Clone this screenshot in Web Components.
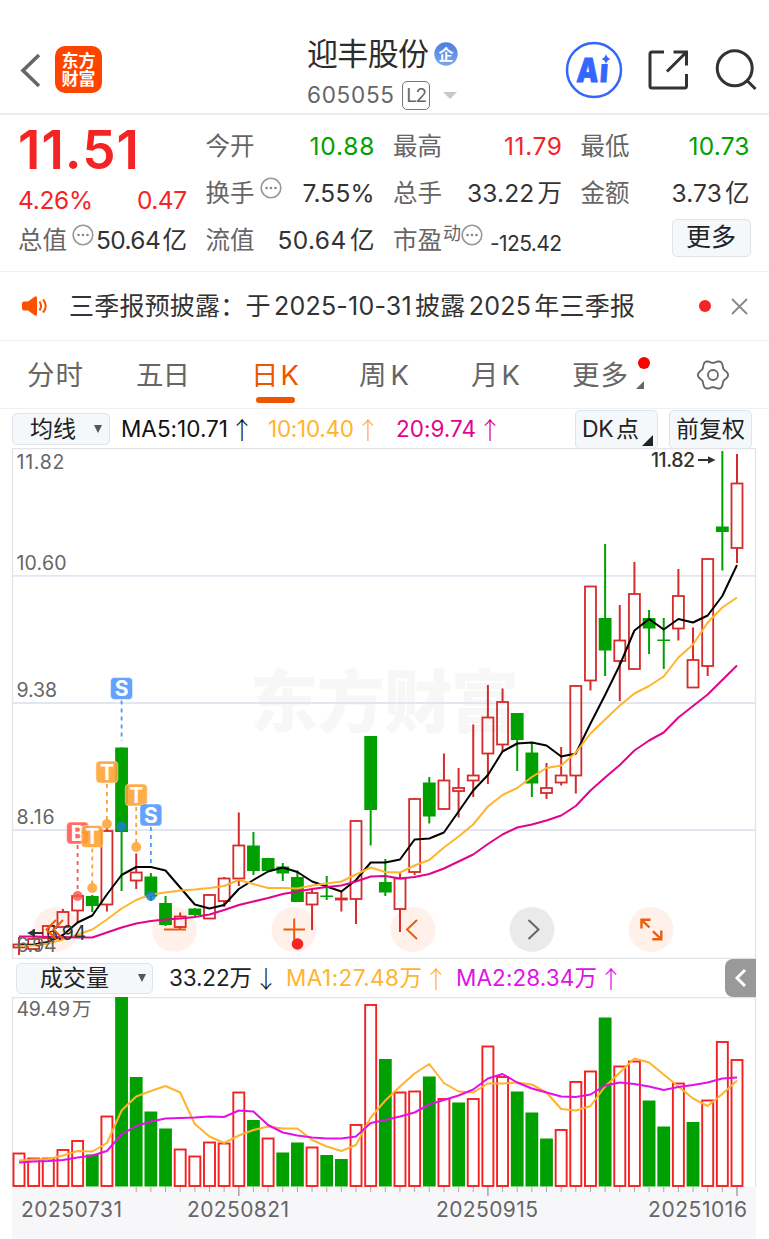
<!DOCTYPE html>
<html lang="zh-CN">
<head>
<meta charset="utf-8">
<meta name="viewport" content="width=device-width, initial-scale=1">
<title>迎丰股份 605055</title>
<style>
    html, body {
        margin: 0;
        background: #fff;
    }

    body {
        width: 769px;
        height: 1239px;
        overflow: hidden;
        font-family: Inter, "Noto Sans CJK SC", sans-serif;
        font-size: 24px;
        line-height: 1;
        color: #333;
    }
</style>
</head>
<body>
<stock-page></stock-page>

<script>
const RED = '#d62b2b';
const GREEN = '#00a000';

// Shared base: puts the markup into an open shadow root
class BaseElement extends HTMLElement {
    connectedCallback() {
        if (this.shadowRoot) return;
        this.attachShadow({ mode: 'open' }).innerHTML = this.render();
        this.ready();
    }

    render() { return ''; }

    ready() {}
}

class StockPage extends BaseElement {
    render() {
        return `
            <style>
                :host {
                    display: flex;
                    flex-direction: column;
                    height: 1239px;
                }
            </style>
            <stock-header></stock-header>
            <quote-panel></quote-panel>
            <notice-bar></notice-bar>
            <period-tabs></period-tabs>
            <ma-bar></ma-bar>
            <k-chart></k-chart>
            <volume-bar></volume-bar>
            <volume-chart></volume-chart>
        `;
    }
}

class StockHeader extends BaseElement {
    render() {
        return `
            <style>
                :host {
                    display: flex;
                    box-sizing: border-box;
                    height: 115px;
                    padding: 26px 12px 0 20px;
                    border-bottom: 2px solid #ececec;
                    align-items: center;
                    justify-content: space-between;
                }
                .side {
                    display: flex;
                    align-items: center;
                    width: 287px;
                }
                .logo {
                    display: flex;
                    flex-direction: column;
                    align-items: center;
                    justify-content: center;
                    width: 47px;
                    height: 47px;
                    margin-left: 13px;
                    border-radius: 10px;
                    background: #ff4400;
                    color: #fff;
                    font-size: 17px;
                    line-height: 18px;
                    font-weight: 700;
                }
                .title {
                    flex: 1;
                    height: 76px;
                }
                .name, .code {
                    display: flex;
                    align-items: center;
                }
                .name {
                    height: 42px;
                    margin-top: 1px;
                    font-size: 31px;
                    color: #2c2c2c;
                }
                .name svg { margin-left: 5px; }
                .code {
                    height: 38px;
                    margin-top: 2px;
                    font-size: 22.5px;
                    color: #666;
                }
                .level {
                    box-sizing: border-box;
                    width: 28px;
                    height: 29px;
                    margin-left: 8px;
                    border: 1.5px solid #777;
                    border-radius: 5px;
                    font-size: 19px;
                    line-height: 27px;
                    text-align: center;
                }
                .arrow {
                    margin-left: 13px;
                    border: 7px solid transparent;
                    border-top-color: #c8c8c8;
                    border-bottom: 0;
                }
                .tools {
                    display: flex;
                    align-items: center;
                }
            </style>
            <div class="side">
                <svg width="22" height="36" viewBox="20 52 22 36">
                    <path d="M39 55L23 70.5L39 86" fill="none" stroke="#666" stroke-width="3.6"/>
                </svg>
                <div class="logo"><span>东方</span><span>财富</span></div>
            </div>
            <div class="title">
                <div class="name">
                    <tracked-text width="122">迎丰股份</tracked-text>
                    <svg width="24" height="24" viewBox="0 0 24 24">
                        <defs><linearGradient id="g" x2="0" y2="1"><stop stop-color="#4a7fe0"/><stop offset="1" stop-color="#7ba6f0"/></linearGradient></defs>
                        <circle cx="12" cy="12" r="11.7" fill="url(#g)"/>
                        <text x="12" y="17.5" text-anchor="middle" font-size="15" font-weight="700" fill="#fff">企</text>
                    </svg>
                </div>
                <div class="code">
                    <tracked-text width="87">605055</tracked-text>
                    <span class="level"><tracked-text width="21">L2</tracked-text></span>
                    <i class="arrow"></i>
                </div>
            </div>
            <div class="tools">
                <svg width="192" height="58" viewBox="565 41.5 192 58" fill="none" stroke="#333" stroke-width="3">
                    <circle cx="594" cy="70.5" r="27" stroke="#3366ff" stroke-width="2.5"/>
                    <text transform="translate(576 82) skewX(-4) scale(0.84 1)" font-size="33" font-weight="900" fill="#3366ff" stroke="#3366ff" stroke-width="0.8">A<tspan dx="1.5">i</tspan></text>
                    <path d="M599.5 54H614V64.5H599.5Z" fill="#fff" stroke="none"/>
                    <path d="M606 54.5Q607 58.3 610.5 59.5Q607 60.7 606 64.5Q605 60.7 601.5 59.5Q605 58.3 606 54.5Z" fill="#3366ff" stroke="none"/>
                    <path d="M664 52.5H652Q650 52.5 650 54.5V86.5Q650 88.5 652 88.5H684.5Q686.5 88.5 686.5 86.5V74.5M673.5 52.5H686.5V66M686 53L667 72"/>
                    <circle cx="734.7" cy="68.7" r="17.5"/>
                    <path d="M746.5 80.5L755.5 89.5"/>
                </svg>
            </div>
        `;
    }
}

// One label/value pair of the quote grid
class QuoteCell extends BaseElement {
    render() {
        const info = this.hasAttribute('info');
        const sup = this.getAttribute('sup') || '';
        return `
            <style>
                :host {
                    display: flex;
                    align-items: center;
                    justify-content: space-between;
                    height: 47px;
                    color: #333;
                    white-space: nowrap;
                }
                .label {
                    display: flex;
                    color: #666;
                }
                .label svg { margin: -4px -5px 0 5px; }
                sup {
                    margin: -3px -5px 0 1px;
                    font-size: 18px;
                    line-height: 18px;
                }
                sup + svg { margin-right: 0 !important; }
            </style>
            <span class="label">${this.getAttribute('label')}${sup ? `<sup>${sup}</sup>` : ''}${info ? `
                <svg width="22" height="22" viewBox="0 0 22 22" fill="#888">
                    <circle cx="11" cy="11" r="9.8" fill="none" stroke="#999" stroke-width="1.6"/>
                    <circle cx="6.5" cy="11" r="1.3"/><circle cx="11" cy="11" r="1.3"/><circle cx="15.5" cy="11" r="1.3"/>
                </svg>` : ''}</span>
            <slot></slot>
        `;
    }
}

class QuotePanel extends BaseElement {
    render() {
        return `
            <style>
                :host {
                    display: grid;
                    box-sizing: border-box;
                    height: 157px;
                    padding: 8px 19px 0 18px;
                    border-bottom: 1px solid #f0f0f0;
                    grid-template-columns: 169px 169px 169px 169px;
                    grid-auto-rows: 47px;
                    column-gap: 18.5px;
                }
                .column { font-size: 24.5px; }
                .price {
                    height: 57px;
                    font-size: 53px;
                    line-height: 54px;
                    font-weight: 600;
                    color: #f52424;
                }
                .change {
                    display: flex;
                    justify-content: space-between;
                    height: 37px;
                    line-height: 41px;
                    color: #f52424;
                }
                .up { color: #f52424; }
                .down { color: #00a000; }
                .small { font-size: 21px; padding-top: 5px; }
                .more {
                    box-sizing: border-box;
                    width: 79px;
                    height: 38px;
                    margin: 2px -1px 0 auto;
                    border: 1.5px solid #dfe4ea;
                    border-radius: 5px;
                    background: #f4f8fa;
                    font-size: 25px;
                    line-height: 35px;
                    text-align: center;
                    color: #222;
                }
            </style>
            <div class="column">
                <div class="price"><tracked-text width="121">11.51</tracked-text></div>
                <div class="change">
                    <tracked-text width="75">4.26%</tracked-text>
                    <tracked-text width="50">0.47</tracked-text>
                </div>
                <quote-cell label="总值" info><tracked-text width="91">50.64 亿</tracked-text></quote-cell>
            </div>
            <div class="column">
                <quote-cell label="今开"><tracked-text class="down" width="65">10.88</tracked-text></quote-cell>
                <quote-cell label="换手" info><tracked-text width="72">7.55%</tracked-text></quote-cell>
                <quote-cell label="流值"><tracked-text width="97">50.64 亿</tracked-text></quote-cell>
            </div>
            <div class="column">
                <quote-cell label="最高"><tracked-text class="up" width="58">11.79</tracked-text></quote-cell>
                <quote-cell label="总手"><tracked-text width="95">33.22 万</tracked-text></quote-cell>
                <quote-cell label="市盈" sup="动" info><tracked-text class="small" width="72">-125.42</tracked-text></quote-cell>
            </div>
            <div class="column">
                <quote-cell label="最低"><tracked-text class="down" width="61">10.73</tracked-text></quote-cell>
                <quote-cell label="金额"><tracked-text width="78">3.73 亿</tracked-text></quote-cell>
                <div class="more">更多</div>
            </div>
        `;
    }
}

class NoticeBar extends BaseElement {
    render() {
        return `
            <style>
                :host {
                    display: flex;
                    box-sizing: border-box;
                    height: 69px;
                    padding: 0 21px;
                    border-bottom: 1px solid #f0f0f0;
                    align-items: center;
                    font-size: 25px;
                }
                tracked-text { margin-left: 20px; }
                .dot {
                    width: 12px;
                    height: 12px;
                    margin-left: auto;
                    border-radius: 50%;
                    background: #f52424;
                }
                .close { margin-left: 20px; }
            </style>
            <svg width="28" height="24" viewBox="0 0 28 24">
                <path d="M3 7.5H7L14 2.5Q16 1.5 16 4V20Q16 22.5 14 21.5L7 16.5H3Q1 16.5 1 14.5V9.5Q1 7.5 3 7.5Z" fill="#ff5000"/>
                <path d="M18.5 7.5Q21.5 12 18.5 16.5M22 5.5Q27.5 12 22 18.5" fill="none" stroke="#ff5000" stroke-width="2"/>
            </svg>
            <tracked-text width="566">三季报预披露：于 2025-10-31 披露 2025 年三季报</tracked-text>
            <i class="dot"></i>
            <svg class="close" width="17" height="17" viewBox="0 0 17 17">
                <path d="M1 1L16 16M16 1L1 16" stroke="#888" stroke-width="1.8"/>
            </svg>
        `;
    }
}

class PeriodTab extends BaseElement {
    render() {
        return `
            <style>
                :host {
                    display: flex;
                    height: 100%;
                    flex-direction: column;
                    align-items: center;
                    color: #666;
                }
                .text {
                    height: 60px;
                    line-height: 69px;
                }
                .line {
                    width: 39px;
                    height: 6px;
                    border-radius: 3px;
                }
                :host([active]) { color: #ee5500; }
                :host([active]) .line { background: #ee5500; margin-top: -4px; }
            </style>
            <span class="text"><slot></slot></span>
            <i class="line"></i>
        `;
    }
}

class PeriodTabs extends BaseElement {
    render() {
        // six-lobed outline of the settings icon
        let gear = '';
        for (let a = 0; a < 360; a += 5) {
            const t = a * Math.PI / 180;
            const r = 13.6 + 1.5 * Math.cos(6 * t);
            gear += `${a ? 'L' : 'M'}${(16 + r * Math.cos(t)).toFixed(2)} ${(16 + r * Math.sin(t)).toFixed(2)}`;
        }
        return `
            <style>
                :host {
                    display: flex;
                    box-sizing: border-box;
                    height: 68px;
                    padding: 0 40px 0 27px;
                    border-bottom: 1px solid #f0f0f0;
                    align-items: center;
                    font-size: 27.5px;
                }
                .day5 { margin-left: 53px; }
                .day { margin-left: 61px; }
                .week { margin-left: 60px; }
                .month { margin-left: 62px; }
                .more {
                    position: relative;
                    margin-left: 52px;
                    padding-right: 16px;
                }
                .more i {
                    position: absolute;
                    right: -6px;
                    top: 16px;
                    width: 12px;
                    height: 12px;
                    border-radius: 50%;
                    background: #ff0000;
                }
                .more b {
                    position: absolute;
                    right: 0;
                    top: 40px;
                    border-left: 8px solid transparent;
                    border-bottom: 8px solid #666;
                }
                .gear { margin-left: auto; }
            </style>
            <period-tab><tracked-text width="56">分时</tracked-text></period-tab>
            <period-tab class="day5"><tracked-text width="54">五日</tracked-text></period-tab>
            <period-tab class="day" active><tracked-text width="48">日 K</tracked-text></period-tab>
            <period-tab class="week"><tracked-text width="50">周 K</tracked-text></period-tab>
            <period-tab class="month"><tracked-text width="49">月 K</tracked-text></period-tab>
            <period-tab class="more"><tracked-text width="56">更多</tracked-text><i></i><b></b></period-tab>
            <svg class="gear" width="32" height="32" viewBox="0 0 32 32" fill="none" stroke="#666" stroke-width="1.8">
                <path d="${gear}Z"/>
                <circle cx="16" cy="16" r="5"/>
            </svg>
        `;
    }
}

class PickButton extends BaseElement {
    render() {
        return `
            <style>
                :host {
                    display: flex;
                    box-sizing: border-box;
                    align-items: center;
                    justify-content: center;
                    border: 1.5px solid #dfe4ea;
                    border-radius: 5px;
                    background: #f4f8fa;
                    color: #222;
                    font-size: 23px;
                    white-space: nowrap;
                }
                .down {
                    border: 4.5px solid transparent;
                    border-top: 8px solid #555;
                    border-bottom: 0;
                }
            </style>
            <slot></slot>${this.hasAttribute('list') ? '<i class="down"></i>' : ''}
        `;
    }
}

// Indicator value followed by a thin arrow
class TrendValue extends BaseElement {
    render() {
        return `
            <style>
                :host {
                    display: flex;
                    align-items: center;
                    font-size: 22.5px;
                }
                .arrow {
                    width: 24px;
                    margin-left: 2px;
                    font-family: "Noto Sans CJK SC", sans-serif;
                    font-size: 24px;
                    font-weight: 300;
                    text-align: center;
                }
            </style>
            <tracked-text width="${this.getAttribute('width')}">${this.getAttribute('value')}</tracked-text>
            <span class="arrow">${this.getAttribute('trend') === 'down' ? '↓' : '↑'}</span>
        `;
    }
}

class MaBar extends BaseElement {
    render() {
        return `
            <style>
                :host {
                    display: flex;
                    box-sizing: border-box;
                    height: 39px;
                    padding: 1px 17px 0 12px;
                    align-items: center;
                }
                .list {
                    width: 98px;
                    height: 32px;
                    gap: 18px;
                    padding-left: 10px;
                    margin-right: 11px;
                }
                .ma5 { color: #111; }
                .ma10 { color: #ffb42e; margin-left: 14px; }
                .ma20 { color: #e0058a; margin-left: 16px; }
                .dk, .adj { height: 39px; width: 83px; }
                .dk {
                    position: relative;
                    margin-left: auto;
                    margin-right: 11px;
                    padding-right: 12px;
                }
                .dk i {
                    position: absolute;
                    right: 4px;
                    bottom: 2px;
                    border-left: 11px solid transparent;
                    border-bottom: 11px solid #222;
                }
            </style>
            <pick-button class="list" list><tracked-text width="46">均线</tracked-text></pick-button>
            <trend-value class="ma5" value="MA5:10.71" width="107"></trend-value>
            <trend-value class="ma10" value="10:10.40" width="86"></trend-value>
            <trend-value class="ma20" value="20:9.74" width="80"></trend-value>
            <pick-button class="dk"><tracked-text width="57">DK 点</tracked-text><i></i></pick-button>
            <pick-button class="adj"><tracked-text width="69">前复权</tracked-text></pick-button>
        `;
    }
}

const STEP = 14.653;
const xAt = i => 19 + i * STEP;

function polyline(values, color) {
    const points = values.map((y, i) => `${xAt(i).toFixed(1)},${y}`).join(' ');
    return `<polyline points="${points}" fill="none" stroke="${color}" stroke-width="2" stroke-linejoin="round"/>`;
}

// colour, high, body top, body bottom, low
const CANDLES = [
    ['r', 937, 944.5, 947.5, 955], ['r', 929, 939, 949, 950], ['r', 925, 926, 938, 941], ['r', 909, 912, 927, 927],
    ['r', 894, 896, 910.5, 922], ['g', 895, 896, 906, 912], ['r', 828, 831, 904.5, 911.5], ['g', 747.5, 747.5, 832, 891],
    ['r', 853.5, 872.5, 880.5, 889], ['g', 873, 876.5, 896.5, 901], ['g', 896, 903, 925, 926], ['r', 912.5, 916.5, 927, 930],
    ['g', 908, 908.5, 915, 916.5], ['r', 894, 895, 918.5, 919], ['r', 877, 878.5, 901, 907], ['r', 812.5, 845.5, 878.5, 886],
    ['g', 832, 845.5, 871, 875], ['g', 858, 858, 871, 871], ['g', 863, 866.5, 873.5, 881], ['g', 870.5, 877, 902, 902],
    ['r', 890, 893, 904.5, 930], ['g', 876, 895.5, 897, 900], ['r', 892, 898.5, 899.5, 911.5], ['r', 820, 821, 899, 924],
    ['g', 736, 736, 810, 845.5], ['g', 859, 882, 892.5, 896], ['r', 872.5, 878.5, 909, 932], ['r', 798, 799, 872, 875],
    ['g', 777, 782.5, 816.5, 823.5], ['r', 753.5, 780.5, 809, 810], ['r', 768, 788, 791, 817.5], ['r', 724.5, 775.5, 780.5, 797],
    ['r', 685, 717.5, 753.5, 784], ['r', 688.5, 702, 744.5, 752], ['g', 713, 713, 740, 771], ['g', 742, 752.5, 783.5, 797],
    ['r', 763, 788, 793, 799], ['r', 747, 775.5, 782.5, 785.5], ['r', 685, 686, 775.5, 793.5], ['r', 586, 586.5, 680.5, 690.5],
    ['g', 544, 618, 650.5, 676], ['r', 605, 640.5, 661, 701], ['r', 562, 594, 669, 669], ['g', 610, 618, 628.5, 654],
    ['g', 618, 639.5, 641, 669], ['r', 569, 596, 628.5, 640.5], ['r', 627.5, 660, 687.5, 688], ['r', 558, 559, 666, 676],
    ['g', 451, 526.5, 532, 570.5], ['r', 454, 483.5, 548, 563]
];

const MA5 = [945, 944.5, 942, 935, 922.5, 915.5, 894.5, 875, 867, 867, 870.5, 887.5, 904.5, 908.5, 905, 889, 880, 871.5, 867.5, 872,
    881.5, 886.5, 891.5, 880, 862.5, 862.5, 859.5, 839.5, 838.5, 832.5, 811.5, 790.5, 775, 751.5, 743.5, 742.5, 745.5, 756.5, 753.5,
    723.5, 695, 665, 630.5, 619, 629.5, 619, 622.5, 615.5, 596, 565];
const MA10 = [946, 945.5, 943.5, 939.5, 934.5, 929.5, 919.5, 908.5, 900, 894.5, 892.5, 890.5, 889.5, 888, 886, 880, 884, 888, 888, 888.5,
    885.5, 883.5, 881.5, 874.5, 867.5, 872, 872.5, 865.5, 860, 847.5, 836.5, 824.5, 806.5, 795, 788, 777, 768, 765.5, 752.5,
    733.5, 719.5, 705.5, 693.5, 686, 676.5, 657.5, 644.5, 622.5, 607.5, 597.5];
const MA20 = [936.5, 936.5, 937, 937, 937.5, 937.5, 932.5, 927.5, 923.5, 921, 919.5, 918.5, 917, 914.5, 910, 905, 901.5, 898, 894, 891.5,
    889, 887, 885.5, 881.5, 876.5, 876, 878.5, 877, 874, 868.5, 861.5, 854.5, 844, 834.5, 827.5, 824.5, 820.5, 815.5, 806,
    790.5, 777.5, 765, 750.5, 740.5, 732.5, 717.5, 706, 694.5, 680, 665.5];

// letter, candle index, badge centre, end of the dashed line, dot centre, colour
const MARKS = [
    ['B', 4, 833, 893, 896, '#ff5a50'],
    ['T', 5, 836.5, 885, 888, '#ffa130'],
    ['T', 6, 772, 822, 824, '#ffa130'],
    ['T', 8, 795, 843, 847, '#ffa130'],
    ['S', 7, 688.5, 741, 826.5, '#4f96ff'],
    ['S', 9, 815, 866, 896, '#4f96ff']
];

class KChart extends BaseElement {
    candle([kind, high, top, bottom, low], i) {
        const x = xAt(i);
        if (kind === 'g') {
            return `<path d="M${x} ${high}V${low}" stroke="${GREEN}" stroke-width="2"/>
                <rect x="${x - 6.4}" y="${top}" width="12.8" height="${bottom - top}" fill="${GREEN}"/>`;
        }
        return `<path d="M${x} ${high}V${top}M${x} ${bottom}V${low}" stroke="${RED}" stroke-width="2"/>
            <rect x="${x - 5.5}" y="${top}" width="11" height="${bottom - top}" fill="none" stroke="${RED}" stroke-width="1.8"/>`;
    }

    mark([letter, i, y, end, dot, color]) {
        const x = xAt(i);
        const dotColor = letter === 'S' ? '#1d7fd0' : color;
        return `<path d="M${x} ${y + 12}V${end}" stroke="${color}" stroke-width="1.8" stroke-dasharray="4 4"/>
            <circle cx="${x}" cy="${dot}" r="5" fill="${dotColor}" opacity="0.85"/>
            <rect x="${x - 11}" y="${y - 11}" width="22" height="22" rx="4" fill="${color}" opacity="0.88" stroke="#fff" stroke-opacity="0.5"/>
            <text x="${x}" y="${y + 7.5}" text-anchor="middle" font-size="21" font-weight="700" fill="#fff">${letter}</text>`;
    }

    render() {
        const grid = [575.8, 703, 830].map(y => `<path d="M13 ${y}H755.5" stroke="#e2e6f0" stroke-width="1.8"/>`).join('');
        const labels = [['11.82', 469, 48], ['10.60', 570, 50], ['9.38', 697, 40.5], ['8.16', 824, 38], ['6.94', 951.5, 40]]
            .map(([t, y, w]) => `<text x="16.5" y="${y}" textLength="${w}" fill="#666">${t}</text>`).join('');
        const circles = [56, 174.5, 294, 413, 532, 651]
            .map((x, i) => `<circle cx="${x}" cy="929.5" r="22.5" fill="${i === 4 ? '#e8e8e8' : '#fff0e8'}" opacity="0.9"/>`).join('');
        return `
            <style>
                :host { display: block; height: 511px; }
                svg { display: block; }
            </style>
            <svg width="769" height="511" viewBox="0 448 769 511" font-size="19.5">
                <text x="250" y="727" font-size="68" font-weight="900" textLength="269" fill="#f7f7f7">东方财富</text>
                ${grid}
                <path d="M12.5 448.5H755.5V958.5H12.5Z" fill="none" stroke="#e2e4e8" stroke-width="1.4"/>
                ${circles}
                ${CANDLES.map((c, i) => this.candle(c, i)).join('')}
                ${polyline(MA5, '#000')}
                ${polyline(MA10, '#ffb42e')}
                ${polyline(MA20, '#e0058a')}
                ${MARKS.map(m => this.mark(m)).join('')}
                ${labels}
                <text x="46" y="939.5" textLength="40" fill="#333">6.94</text>
                <path d="M43 933H29" stroke="#333" stroke-width="2"/><path d="M27 933L35 929V937Z" fill="#333"/>
                <text x="651" y="467" textLength="44" font-weight="500" fill="#333">11.82</text>
                <path d="M698 460H710" stroke="#333" stroke-width="2"/><path d="M715.5 460L708 456.3V463.7Z" fill="#333"/>
                <g fill="none" stroke="#f05a0a" stroke-width="2">
                    <path d="M56 920L46.5 929.5L56 939M63 920L53.5 929.5L63 939"/>
                    <path d="M164 929.5H186M283.5 929.5H305M294.2 918.5V940"/>
                    <path d="M417 920L407 929.5L417 939"/>
                    <path d="M641.5 928.5V919.8H650.5M642 920.3L649.5 927.5M661.3 930.5V939.3H652.3M661 939L653 931.3" stroke-width="2.4"/>
                </g>
                <path d="M528.5 920L538.5 929.5L528.5 939" fill="none" stroke="#666" stroke-width="2"/>
                <circle cx="297.5" cy="944" r="5.8" fill="#f52424"/>
            </svg>
        `;
    }
}

class VolumeBar extends BaseElement {
    render() {
        return `
            <style>
                :host {
                    display: flex;
                    height: 38px;
                    padding: 0 13px 0 16px;
                    align-items: center;
                    color: #222;
                }
                pick-button {
                    width: 137px;
                    height: 31px;
                    gap: 29px;
                    padding-left: 17px;
                    margin-right: 16px;
                }
                .ma1 { color: #ffb42e; margin-left: 8px; }
                .ma2 { color: #e012e8; margin-left: 8px; }
                .fold {
                    display: flex;
                    width: 31px;
                    height: 38px;
                    margin-left: auto;
                    border-radius: 8px 0 0 8px;
                    background: #999;
                }
            </style>
            <pick-button list><tracked-text width="69">成交量</tracked-text></pick-button>
            <trend-value value="33.22万" width="83" trend="down"></trend-value>
            <trend-value class="ma1" value="MA1:27.48万" width="136"></trend-value>
            <trend-value class="ma2" value="MA2:28.34万" width="141"></trend-value>
            <div class="fold">
                <svg width="31" height="38" viewBox="0 0 31 38"><path d="M20 11L12 19L20 27" fill="none" stroke="#fff" stroke-width="3"/></svg>
            </div>
        `;
    }
}

const VOLUMES = [
    'r1153.5', 'r1158.5', 'r1158.5', 'r1150', 'r1141', 'g1154.5', 'r1116.5', 'g997', 'g1077', 'g1111.5',
    'g1128.5', 'r1149.5', 'r1156.5', 'r1142.5', 'r1143.5', 'r1092.5', 'g1120', 'r1138.5', 'g1152.5', 'g1142.5',
    'r1147.5', 'g1155', 'g1159', 'r1125', 'r1005', 'g1059', 'r1092.5', 'r1091.5', 'g1076.5', 'r1099',
    'g1102.5', 'r1099', 'r1046.5', 'r1077', 'g1091.5', 'g1112.5', 'g1138.5', 'r1130', 'r1082', 'r1071.5',
    'g1017.5', 'r1066.5', 'r1061.5', 'g1100.5', 'g1126.5', 'r1083.5', 'g1122', 'r1100.5', 'r1042', 'r1060'
];
const VMA1 = [1160.5, 1159.5, 1159, 1155.5, 1151, 1151.5, 1143, 1110.5, 1096.5, 1091, 1086, 1092.5, 1124, 1136.5, 1143, 1135.5, 1130, 1126.5,
    1128.5, 1128.5, 1140, 1146.5, 1151, 1145, 1117.5, 1100.5, 1086.5, 1073.5, 1064, 1083, 1091.5, 1092.5, 1083.5, 1083.5, 1082.5, 1084.5,
    1092.5, 1109, 1110.5, 1106, 1086.5, 1072.5, 1058.5, 1062.5, 1074.5, 1086.5, 1098.5, 1106, 1094, 1080.5];
const VMA2 = [1162.5, 1161.5, 1161, 1160, 1157.5, 1155.5, 1151, 1134.5, 1126, 1121.5, 1118.5, 1118, 1117.5, 1116.5, 1117, 1110.5, 1111.5, 1125,
    1132.5, 1135.5, 1137.5, 1138.5, 1138.5, 1136.5, 1123, 1120, 1116.5, 1112.5, 1104.5, 1100, 1095.5, 1089.5, 1078.5, 1074, 1082.5, 1088.5,
    1092.5, 1096.5, 1097, 1094.5, 1085.5, 1082.5, 1084, 1086.5, 1090, 1087, 1085, 1082.5, 1078.5, 1077.5];

class VolumeChart extends BaseElement {
    bar(item, i) {
        const x = xAt(i);
        const y = Number(item.slice(1));
        return item[0] === 'g'
            ? `<rect x="${x - 6.4}" y="${y}" width="12.8" height="${1186.5 - y}" fill="${GREEN}"/>`
            : `<rect x="${x - 5.5}" y="${y}" width="11" height="${1186 - y}" fill="#fff" stroke="#f52020" stroke-width="1.9"/>`;
    }

    render() {
        let ticks = '';
        for (let i = 8; i < 50; i++) {
            const long = [15, 32, 49].includes(i);
            ticks += `<path d="M${xAt(i)} 1187V${long ? 1196 : 1192}" stroke="#aaa" stroke-width="${long ? 1.6 : 1}"/>`;
        }
        return `
            <style>
                :host {
                    display: block;
                    height: 242px;
                }
                .plot { display: block; }
                .axis {
                    display: flex;
                    box-sizing: border-box;
                    width: 744px;
                    height: 43px;
                    margin-left: 12px;
                    padding: 1px 9px 0;
                    background: #f7f7fa;
                    font-size: 21px;
                    line-height: 23px;
                    color: #666;
                }
                .d2 { margin-left: 65px; }
                .d3 { margin-left: 147px; }
                .d4 { margin-left: auto; }
            </style>
            <svg class="plot" width="769" height="200" viewBox="0 997 769 200">
                <path d="M12 1187H756V1197H12Z" fill="#f7f7fa"/>
                <path d="M12.5 1187V997.5H755.5V1187" fill="none" stroke="#e2e4e8" stroke-width="1.4"/>
                ${VOLUMES.map((v, i) => this.bar(v, i)).join('')}
                ${polyline(VMA1, '#ffb42e')}
                ${polyline(VMA2, '#e012e8')}
                ${ticks}
                <text x="16.5" y="1016" font-size="19.5" word-spacing="-3" textLength="75" fill="#666">49.49 万</text>
            </svg>
            <div class="axis">
                <tracked-text width="101">20250731</tracked-text>
                <tracked-text class="d2" width="102">20250821</tracked-text>
                <tracked-text class="d3" width="102">20250915</tracked-text>
                <tracked-text class="d4" width="99">20251016</tracked-text>
            </div>
        `;
    }
}

// Text whose letter spacing is chosen so that it fills the given width
class TrackedText extends BaseElement {
    render() {
        return `
            <style>
                :host {
                    display: inline-block;
                    flex: none;
                    white-space: nowrap;
                    word-spacing: -0.16em;
                }
                span { display: inline-block; }
            </style>
            <span><slot></slot></span>
        `;
    }

    ready() {
        const width = Number(this.getAttribute('width'));
        const span = this.shadowRoot.querySelector('span');
        const count = this.textContent.length;
        const spacing = (width - span.getBoundingClientRect().width) / (count - 1);
        span.style.letterSpacing = `${spacing}px`;
        this.style.width = `${width}px`;
    }
}

customElements.define('stock-page', StockPage);
customElements.define('stock-header', StockHeader);
customElements.define('quote-panel', QuotePanel);
customElements.define('quote-cell', QuoteCell);
customElements.define('notice-bar', NoticeBar);
customElements.define('period-tabs', PeriodTabs);
customElements.define('period-tab', PeriodTab);
customElements.define('ma-bar', MaBar);
customElements.define('pick-button', PickButton);
customElements.define('k-chart', KChart);
customElements.define('volume-bar', VolumeBar);
customElements.define('volume-chart', VolumeChart);
customElements.define('trend-value', TrendValue);
customElements.define('tracked-text', TrackedText);
</script>
</body>
</html>
